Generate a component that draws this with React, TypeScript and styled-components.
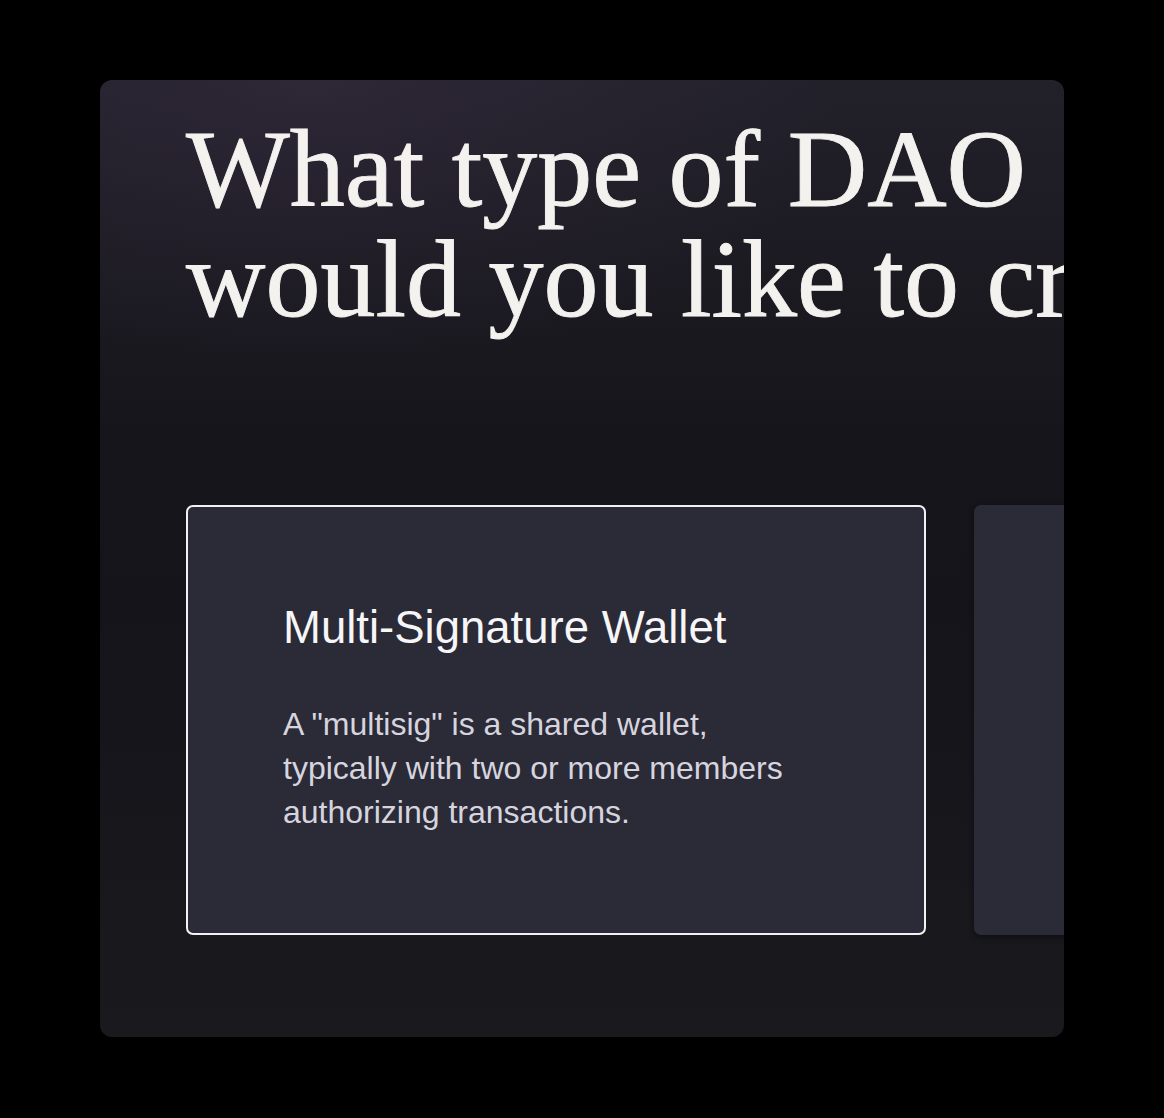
import React from "react";
import styled, { createGlobalStyle } from "styled-components";

const GlobalStyle = createGlobalStyle`
  html, body {
    margin: 0;
    padding: 0;
    background: #000;
  }
  body {
    font-family: "Liberation Sans", Arial, sans-serif;
  }
`;

const Page = styled.main`
  width: 1164px;
  height: 1118px;
  box-sizing: border-box;
  padding: 80px 100px 81px;
  background: #000;
`;

const Panel = styled.section`
  height: 957px;
  box-sizing: border-box;
  border-radius: 12px;
  overflow: hidden;
  padding: 34px 0 0 86px;
  background:
    radial-gradient(ellipse 55% 30% at 22% 0%, rgba(72, 52, 82, 0.3), rgba(72, 52, 82, 0) 100%),
    linear-gradient(180deg, #22212a 0%, #16151b 38%, #15141a 55%, #1a191e 100%);
`;

const Heading = styled.h1`
  margin: 0;
  font-family: "Liberation Serif", "Times New Roman", serif;
  font-weight: 400;
  font-size: 110px;
  line-height: 110px;
  color: #f4f2ef;
  -webkit-text-stroke: 0.9px #f4f2ef;
  white-space: nowrap;
`;

const CardRow = styled.div`
  display: flex;
  gap: 48px;
  margin-top: 171px;
`;

const Card = styled.div<{ $selected?: boolean }>`
  flex: 0 0 740px;
  height: 430px;
  box-sizing: border-box;
  border-radius: 7px;
  border: 2px solid ${(p) => (p.$selected ? "#f2f2f4" : "transparent")};
  background: #2b2a37;
  padding: 94px 95px;
  box-shadow: ${(p) => (p.$selected ? "none" : "0 2px 6px rgba(0, 0, 0, 0.45)")};
`;

const CardTitle = styled.h2`
  margin: 0;
  font-family: "Liberation Sans", Arial, sans-serif;
  font-weight: 400;
  font-size: 45.5px;
  line-height: 54px;
  color: #f6f6f8;
`;

const CardText = styled.p`
  margin: 47px 0 0;
  max-width: 520px;
  font-family: "Liberation Sans", Arial, sans-serif;
  font-size: 32px;
  line-height: 44px;
  color: #d6d5df;
`;

export default function App() {
  return (
    <>
      <GlobalStyle />
      <Page>
        <Panel>
          <Heading>
            What type of DAO
            <br />
            would you like to create?
          </Heading>
          <CardRow>
            <Card $selected>
              <CardTitle>Multi-Signature Wallet</CardTitle>
              <CardText>
                A "multisig" is a shared wallet, typically with two or more members authorizing transactions.
              </CardText>
            </Card>
            <Card>
              <CardTitle>Token-Weighted Governance</CardTitle>
              <CardText>
                Members vote on proposals with tokens, weighted by the amount they hold.
              </CardText>
            </Card>
          </CardRow>
        </Panel>
      </Page>
    </>
  );
}
